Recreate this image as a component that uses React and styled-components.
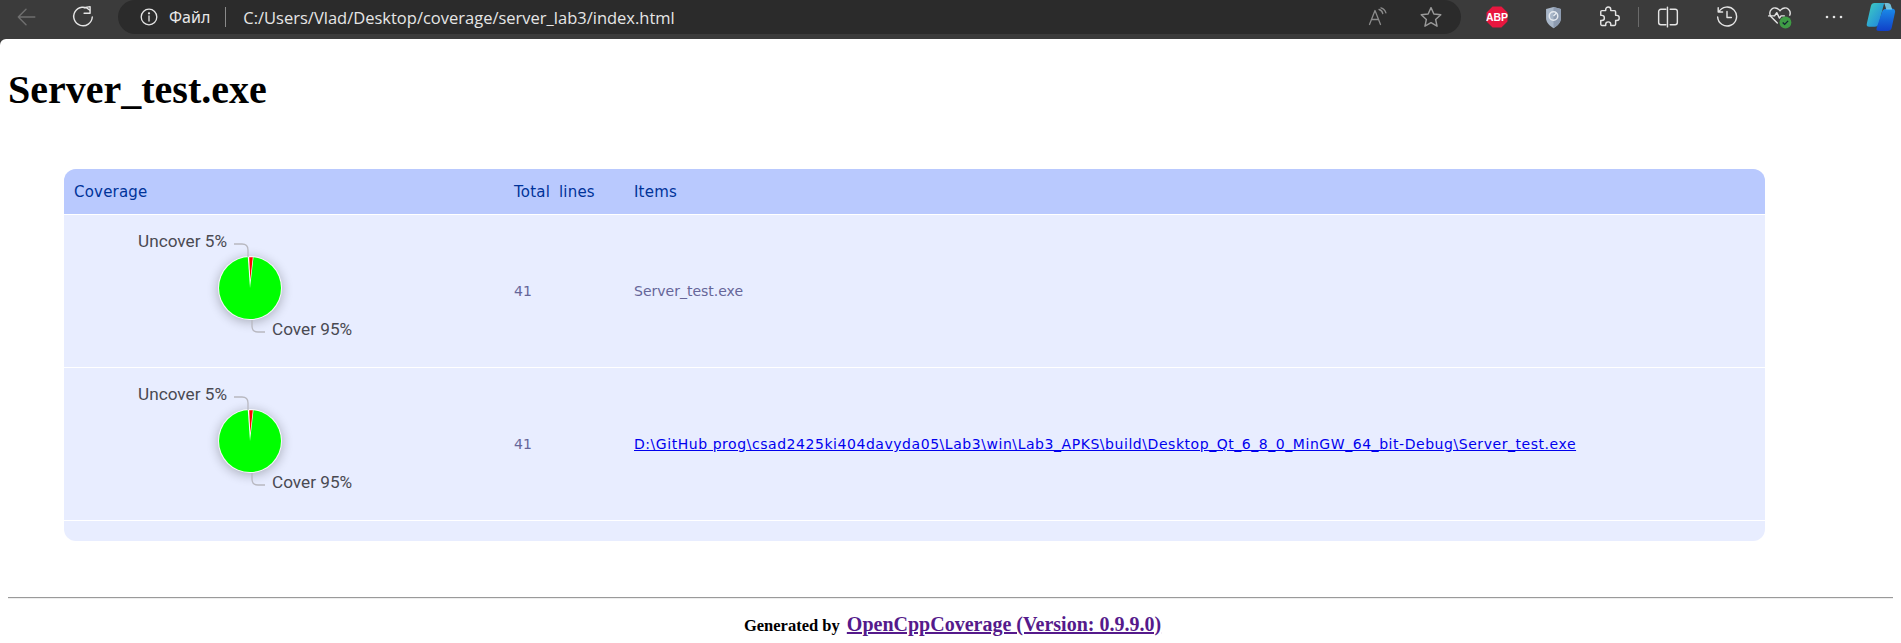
import React from "react";
import styled, { createGlobalStyle } from "styled-components";

const Global = createGlobalStyle`
  html, body { margin: 0; padding: 0; background: #3b3b3b; overflow: hidden; }
  body { width: 1901px; height: 643px; }
`;

const Toolbar = styled.div`
  height: 39px;
  background: #3b3b3b;
  display: flex;
  align-items: flex-start;
`;
const NavSlot = styled.div`
  width: ${(p) => p.$w}px;
  height: 34px;
  display: flex;
  align-items: center;
  justify-content: center;
  flex: none;
`;
const AddressBar = styled.div`
  margin-left: 5px;
  margin-right: 8px;
  width: 1343px;
  height: 34px;
  border-radius: 17px;
  background: #2b2b2b;
  display: flex;
  align-items: center;
  padding-left: 22px;
  padding-right: 7px;
  box-sizing: border-box;
  flex: none;
`;
const Scheme = styled.span`
  font: 16px "Noto Sans", sans-serif;
  color: #e8e8e8;
  margin-left: 11px;
`;
const Divider = styled.span`
  width: 1px;
  height: 20px;
  background: #8a8a8a;
  margin: 0 17px 0 15px;
`;
const Url = styled.span`
  font: 16.5px "Open Sans", sans-serif;
  color: #e6e6e6;
`;
const Spacer = styled.div`
  flex: 1;
`;
const IconBtn = styled.div`
  width: ${(p) => p.$w}px;
  height: 34px;
  flex: none;
  display: flex;
  align-items: center;
  justify-content: center;
`;
const Sep = styled.span`
  width: 1px;
  height: 20px;
  margin: 7px 0 0 2px;
  background: #6a6a6a;
  flex: none;
`;
const Page = styled.main`
  background: #fff;
  border-radius: 6px 0 0 0;
  height: 604px;
  padding: 0 8px;
  box-sizing: border-box;
  overflow: hidden;
  color: #000;
`;
const Title = styled.h1`
  font: bold 40px/44px "Liberation Serif", serif;
  margin: 0;
  padding-top: 29px;
`;
const Table = styled.div`
  margin: 57px 0 0 56px;
  width: 1701px;
  border-radius: 12px;
  overflow: hidden;
  background: #e8edff;
  font: 14px "DejaVu Sans", sans-serif;
`;
const Row = styled.div`
  display: grid;
  grid-template-columns: 440px 120px 1fr;
  align-items: center;
  height: ${(p) => p.$h}px;
  box-sizing: border-box;
  border-bottom: 1px solid #fff;
`;
const Head = styled(Row)`
  background: #b9c9fe;
  color: #003399;
`;
const Cell = styled.div`
  padding-left: 10px;
  color: #669;
  font-size: 14px;
`;
const HeadCell = styled.div`
  padding-left: 10px;
  font-size: 15px;
  letter-spacing: 0.2px;
  word-spacing: 4px;
`;
const ItemLink = styled.a`
  color: #0000ee;
  text-decoration: underline;
  font-size: 14px;
  letter-spacing: 0.55px;
`;
const TableFoot = styled.div`
  height: 20px;
`;
const Rule = styled.hr`
  margin: 56px 0 0;
  border: 0;
  height: 2px;
  background: linear-gradient(#9a9a9a 50%, #eeeeee 50%);
`;
const Footer = styled.div`
  text-align: center;
  font: bold 16.5px "Liberation Serif", serif;
  margin-top: 14px;
  padding-left: 4px;
`;
const FootLink = styled.a`
  color: #551a8b;
  text-decoration: underline;
  font-size: 20px;
  margin-left: 3px;
`;
const ChartCell = styled.div`
  height: 100%;
  overflow: hidden;
`;

const stroke = { fill: "none", stroke: "#e4e4e4", strokeWidth: 1.3, strokeLinecap: "round", strokeLinejoin: "round" };

const Back = () => (
  <svg width="22" height="22" viewBox="0 0 20 20" {...stroke} stroke="#6f6f6f"><path d="M18 10H3M10 3l-7 7 7 7" /></svg>
);
const Reload = () => (
  <svg width="24" height="24" viewBox="0 0 22 22" {...stroke}><path d="M17 4.500A8.500 8.500 0 1 0 19.500 11" /><path d="M12 2.500 17.500 1.500V7.500H12" /></svg>
);
const Info = () => (
  <svg width="18" height="18" viewBox="0 0 18 18" {...stroke}><circle cx="9" cy="9" r="7.800" /><path d="M9 8v5" /><circle cx="9" cy="5.300" r=".5" fill="#e4e4e4" /></svg>
);
const ReadAloud = () => (
  <svg width="20" height="20" viewBox="0 0 20 20" {...stroke} stroke="#8b8b8b"><path d="M1.500 17.500 7 3.500l5.500 14M3.400 12.500h7.200M11 2.500c2 .5 3.300 2 3.800 4M13 .8c2.600.8 4.300 2.800 4.900 5" /></svg>
);
const Star = () => (
  <svg width="22" height="22" viewBox="0 0 20 20" {...stroke} stroke="#9a9a9a"><path d="M10 1.500 12.600 7.300 18.900 8 14.200 12.200 15.500 18.400 10 15.200 4.500 18.400 5.800 12.200 1.100 8 7.400 7.300Z" /></svg>
);
const Abp = () => (
  <svg width="22" height="22" viewBox="0 0 20 20">
    <path d="M6 .5h8L19.500 6v8L14 19.500H6L.5 14V6Z" fill="#e8173f" />
    <text x="10" y="13.800" textAnchor="middle" fontFamily="Liberation Sans" fontWeight="700" fontSize="9.500" fill="#fff">ABP</text>
  </svg>
);
const Shield = () => (
  <svg width="17" height="23" viewBox="0 0 16 21">
    <path d="M8 .5 15 2.500V11c0 4.500-3.500 7.500-7 9.500C4.500 18.500 1 15.500 1 11V2.500Z" fill="#a9b7c9" />
    <path d="M8 .5 15 2.500V11c0 4.500-3.500 7.500-7 9.500Z" fill="#8d9bb0" />
    <circle cx="8" cy="9" r="4" fill="none" stroke="#e6eaf0" strokeWidth="1.400" />
    <path d="M8 9l3-3" stroke="#e6eaf0" strokeWidth="1.400" />
  </svg>
);
const Puzzle = () => (
  <svg width="22" height="22" viewBox="0 0 20 20" {...stroke}>
    <path d="M7 4.200V3.200a2.300 2.300 0 0 1 4.600 0v1h3.400a1 1 0 0 1 1 1v3.300h1a2.300 2.300 0 0 1 0 4.600h-1v3.600a1 1 0 0 1-1 1h-3.400v-1a2.300 2.300 0 0 0-4.600 0v1H3.500a1 1 0 0 1-1-1v-3.600h1a2.300 2.300 0 0 0 0-4.600h-1V5.200a1 1 0 0 1 1-1Z" />
  </svg>
);
const Split = () => (
  <svg width="22" height="22" viewBox="0 0 20 20" {...stroke}>
    <path d="M8 3H3.500a2 2 0 0 0-2 2v10a2 2 0 0 0 2 2H8M12 3h4.500a2 2 0 0 1 2 2v10a2 2 0 0 1-2 2H12M9.500 1v18" />
  </svg>
);
const History = () => (
  <svg width="22" height="22" viewBox="0 0 20 20" {...stroke}>
    <path d="M2.500 5.500A8.600 8.600 0 1 1 1.500 10M2 1.500v4h4M10 5v5.500h4" />
  </svg>
);
const Health = () => (
  <svg width="26" height="26" viewBox="0 0 24 24">
    <path d="M9.500 17.500 4 12a5 5 0 0 1 .2-7.200 4.900 4.900 0 0 1 6.800.4l1 1.100 1-1.100a4.900 4.900 0 0 1 6.800-.4 5 5 0 0 1 1.200 5.500" {...stroke} />
    <path d="M1.500 11H7l2-3 2.500 5 1.500-2h3" {...stroke} />
    <circle cx="17" cy="17" r="5.500" fill="#3f9c45" />
    <path d="M14.500 17l1.800 1.800 3.200-3.200" fill="none" stroke="#123" strokeWidth="1.200" />
  </svg>
);
const Dots = () => (
  <svg width="18" height="4" viewBox="0 0 18 4" fill="#e4e4e4"><circle cx="2" cy="2" r="1.300" /><circle cx="9" cy="2" r="1.300" /><circle cx="16" cy="2" r="1.300" /></svg>
);
const Copilot = () => (
  <svg width="30" height="30" viewBox="0 0 28 28">
    <defs>
      <linearGradient id="cpa" x1="0" y1="0" x2="1" y2="1"><stop offset="0" stopColor="#3fd0c0" /><stop offset="1" stopColor="#1d7fe0" /></linearGradient>
      <linearGradient id="cpb" x1="0" y1="0" x2="0" y2="1"><stop offset="0" stopColor="#1a8be8" /><stop offset="1" stopColor="#1040c8" /></linearGradient>
    </defs>
    <path d="M8 1h9l-5 19q-.8 3-4 3H3q-3 0-2.200-3L4.500 4Q5.200 1 8 1Z" fill="url(#cpa)" />
    <path d="M21 6h3q3 0 3.200 3L24 24q-.8 3-4 3h-8q-3 0-2-3l5-15q1-3 6-3Z" fill="url(#cpb)" />
    <path d="M17 1h3q3 0 3.500 3l1 3H19Z" fill="#7fe0ff" opacity=".8" />
  </svg>
);

const Chart = () => (
  <svg width="320" height="152" viewBox="0 0 320 152">
    <defs>
      <filter id="pieshadow" x="-50%" y="-50%" width="200%" height="200%"><feGaussianBlur stdDeviation="6" /></filter>
    </defs>
    <circle cx="186" cy="75" r="32" fill="#000" opacity=".28" filter="url(#pieshadow)" />
    <circle cx="186" cy="73" r="32" fill="#fff" opacity=".9" />
    <circle cx="186" cy="73" r="31" fill="#00ff00" />
    <path d="M186 73 183.800 42.100 A31 31 0 0 1 189.500 42.200Z" fill="#fff" />
    <path d="M186.300 65 185.200 42.200 A31 31 0 0 1 188.800 42.300Z" fill="#ff0000" />
    <path d="M170 29h8q6 0 6 6v7" fill="none" stroke="#b8b8c0" strokeWidth="1.300" />
    <path d="M188 105v6q0 6 6 6h7" fill="none" stroke="#b8b8c0" strokeWidth="1.300" />
    <text x="74" y="32" fontFamily="Roboto, sans-serif" fontSize="17.200" fill="#4a4a52">Uncover 5%</text>
    <text x="208" y="120" fontFamily="Roboto, sans-serif" fontSize="17.200" fill="#4a4a52">Cover 95%</text>
  </svg>
);

export default function App() {
  return (
    <>
      <Global />
      <Toolbar>
        <NavSlot $w={52}><Back /></NavSlot>
        <NavSlot $w={61}><Reload /></NavSlot>
        <AddressBar>
          <Info />
          <Scheme>Файл</Scheme>
          <Divider />
          <Url>C:/Users/Vlad/Desktop/coverage/server_lab3/index.html</Url>
          <Spacer />
          <IconBtn $w={60}><ReadAloud /></IconBtn>
          <IconBtn $w={46}><Star /></IconBtn>
        </AddressBar>
        <IconBtn $w={56}><Abp /></IconBtn>
        <IconBtn $w={56}><Shield /></IconBtn>
        <IconBtn $w={55}><Puzzle /></IconBtn>
        <Sep />
        <IconBtn $w={58}><Split /></IconBtn>
        <IconBtn $w={60}><History /></IconBtn>
        <IconBtn $w={46}><Health /></IconBtn>
        <IconBtn $w={62}><Dots /></IconBtn>
        <IconBtn $w={32}><Copilot /></IconBtn>
      </Toolbar>
      <Page>
        <Title>Server_test.exe</Title>
        <Table>
          <Head $h={46}>
            <HeadCell>Coverage</HeadCell>
            <HeadCell>Total lines</HeadCell>
            <HeadCell>Items</HeadCell>
          </Head>
          <Row $h={153}>
            <ChartCell><Chart /></ChartCell>
            <Cell>41</Cell>
            <Cell>Server_test.exe</Cell>
          </Row>
          <Row $h={153}>
            <ChartCell><Chart /></ChartCell>
            <Cell>41</Cell>
            <Cell>
              <ItemLink href="#">D:\GitHub prog\csad2425ki404davyda05\Lab3\win\Lab3_APKS\build\Desktop_Qt_6_8_0_MinGW_64_bit-Debug\Server_test.exe</ItemLink>
            </Cell>
          </Row>
          <TableFoot />
        </Table>
        <Rule />
        <Footer>
          Generated by <FootLink href="#">OpenCppCoverage (Version: 0.9.9.0)</FootLink>
        </Footer>
      </Page>
    </>
  );
}
